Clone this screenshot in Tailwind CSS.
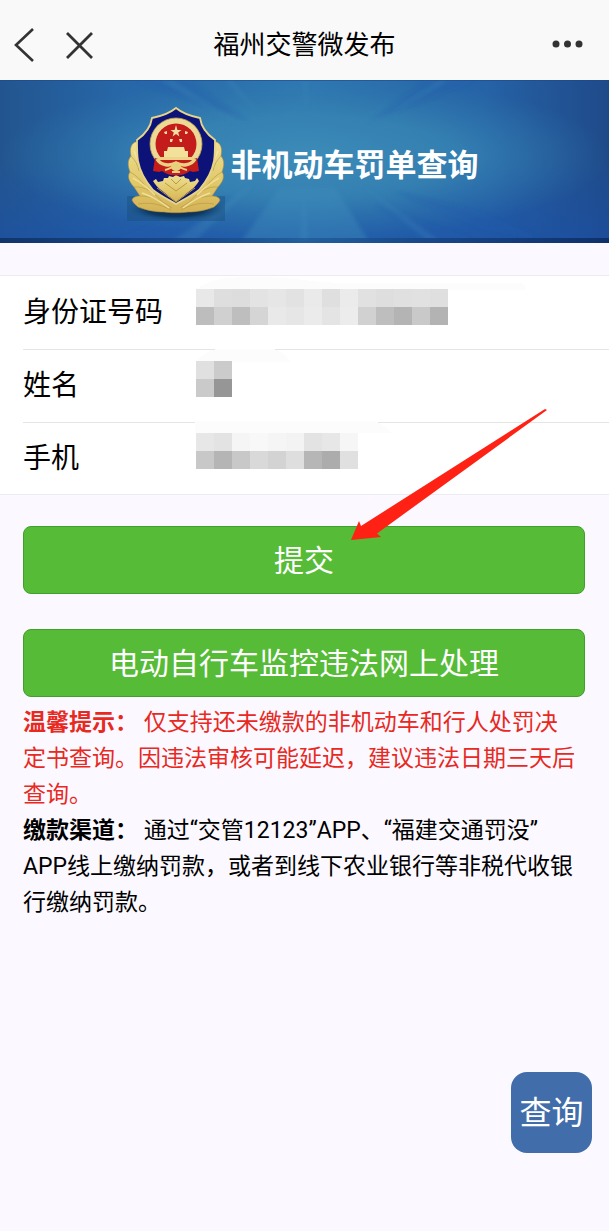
<!DOCTYPE html>
<html lang="zh-CN">
<head>
  <meta charset="UTF-8" />
  <meta name="viewport" content="width=device-width, initial-scale=1.0" />
  <title>福州交警微发布</title>
  <script src="https://cdn.jsdelivr.net/npm/@tailwindcss/browser@4"></script>
</head>
<body class="relative min-h-screen bg-[#fbf9ff] text-black font-[Roboto,'Noto_Sans_CJK_SC',sans-serif]">
  <header class="h-20 bg-[#f9f9f9] px-3 pt-2.5 grid grid-cols-[1fr_auto_1fr] items-center">
    <div class="flex items-center gap-6">
      <button type="button" aria-label="返回">
        <svg class="w-6 h-9" viewBox="0 0 24 36" fill="none" stroke="#333" stroke-width="2.6"><path d="M21 2 4 18 21 34" /></svg>
      </button>
      <button type="button" aria-label="关闭" class="ml-1">
        <svg class="w-8 h-9" viewBox="0 0 32 36" fill="none" stroke="#333" stroke-width="2.8"><path d="M3 6 28 31M28 6 3 31" /></svg>
      </button>
    </div>
    <h1 class="text-[26px] leading-9">福州交警微发布</h1>
    <button type="button" aria-label="更多" class="justify-self-end mr-3.5">
      <svg class="w-8 h-8" viewBox="0 0 32 32" fill="#333"><circle cx="5" cy="15" r="3.5" /><circle cx="16.500" cy="15" r="3.500" /><circle cx="28" cy="15" r="3.500" /></svg>
    </button>
  </header>

  <section class="relative h-[163px] overflow-hidden bg-[#2563a6]">
    <!-- Strahlen im Hintergrund -->
    <svg class="absolute inset-0 w-full h-full" viewBox="0 0 609 163" preserveAspectRatio="none">
      <defs>
        <linearGradient id="base" x1="0" y1="0" x2="1" y2="0">
          <stop offset="0" stop-color="#22558f" />
          <stop offset=".2" stop-color="#2767a8" />
          <stop offset=".5" stop-color="#2e78b2" />
          <stop offset=".8" stop-color="#2562a6" />
          <stop offset="1" stop-color="#1f4a89" />
        </linearGradient>
        <radialGradient id="glow" cx=".5" cy=".47" r=".5">
          <stop offset="0" stop-color="#3c8bb8" />
          <stop offset=".5" stop-color="#3785b3" stop-opacity=".8" />
          <stop offset="1" stop-color="#2f75aa" stop-opacity="0" />
        </radialGradient>
        <linearGradient id="foot" x1="0" y1="0" x2="0" y2="1">
          <stop offset="0" stop-color="#1d50a6" stop-opacity="0" />
          <stop offset="1" stop-color="#1b4fa6" stop-opacity=".6" />
        </linearGradient>
        <linearGradient id="edge" x1="0" y1="0" x2="1" y2="0">
          <stop offset="0" stop-color="#0f2f63" />
          <stop offset=".3" stop-color="#164484" />
          <stop offset=".5" stop-color="#1f5c9a" />
          <stop offset=".7" stop-color="#164484" />
          <stop offset="1" stop-color="#0d2a62" />
        </linearGradient>
        <filter id="soft"><feGaussianBlur stdDeviation="2" /></filter>
      </defs>
      <path fill="url(#base)" d="M0 0h609v163H0z" />
      <path fill="url(#foot)" d="M0 80h609v83H0z" />
      <path fill="url(#glow)" d="M0 0h609v163H0z" />
      <g filter="url(#soft)">
        <path fill="#3d8dbb" opacity=".4" d="M280 108h55l35 55H240z" />
        <path fill="#1f58ac" opacity=".28" d="M130 0h60l60 42zM480 0h-55l-55 42zM105 163l130-48-52 48zM375 125l60 38h50zM390 110l95 40 60 10-70-30z" />
        <path fill="#4c9bc4" opacity=".2" d="M160 0h12l70 46zM225 0h6l30 36zM440 0h9l-80 46zM170 163l85-60-62 60zM430 163l-68-58 80 58zM304 0h3v40zM300 163l4-50 4 50z" />
      </g>
      <path fill="#1b478f" opacity=".55" d="M0 0h609v1H0z" />
      <path fill="url(#edge)" opacity=".85" d="M0 158h609v5H0z" />
    </svg>

    <div class="relative h-full flex items-center justify-center gap-1.5 pr-1">
      <svg class="w-[98px] h-[116px] mt-1" viewBox="0 0 98 116" role="img" aria-label="警徽">
        <defs>
          <linearGradient id="gold" x1="0" y1="0" x2="0" y2="1">
            <stop offset="0" stop-color="#efdf94" />
            <stop offset=".6" stop-color="#e0c768" />
            <stop offset="1" stop-color="#d4b355" />
          </linearGradient>
          <radialGradient id="shade">
            <stop offset="0" stop-color="#061d38" />
            <stop offset=".6" stop-color="#0c3459" stop-opacity=".85" />
            <stop offset="1" stop-color="#205a8b" stop-opacity="0" />
          </radialGradient>
        </defs>
        <path fill="#164a78" opacity=".4" d="M0 90h98v25H0z" />
        <ellipse cx="49" cy="103" rx="50" ry="13" fill="url(#shade)" />
        <!-- Ährenkranz -->
        <path fill="url(#gold)" stroke="#b08f3d" stroke-width=".6" d="M8 36c-5 3-5 8-4 14-4 5-3 10-1 16-3 4-1 10 4 15l6 9c-4 0-7 1-8 4 1 3 4 5 6 7 7 3 17 5 26 5 5 1 19 1 24 0 9 0 19-2 26-5 2-2 5-4 6-7-1-3-4-4-8-4l6-9c5-5 7-11 4-15 2-6 3-11-1-16 1-6 1-11-4-14z" />
        <g fill="none" stroke="#b49545" stroke-width="1" opacity=".6">
          <path d="M4 50c4 4 7 9 8 15M3 66c6 3 11 8 15 14M7 81c10-1 21 5 30 17M13 90c10 0 21 4 32 12M11 98c12-2 22 0 33 6" />
          <path d="M94 50c-4 4-7 9-8 15M95 66c-6 3-11 8-15 14M91 81c-10-1-21 5-30 17M85 90c-10 0-21 4-32 12M87 98c-12-2-22 0-33 6" />
        </g>
        <g fill="none" stroke="#f6e9a9" stroke-width="1.400" opacity=".8">
          <path d="M7 45c4 9 7 20 13 30M6 72c7 4 15 10 22 17M15 87c9 3 18 8 27 15" />
          <path d="M91 45c-4 9-7 20-13 30M92 72c-7 4-15 10-22 17M83 87c-9 3-18 8-27 15" />
        </g>
        <!-- Schild -->
        <path fill="#0c1277" stroke="#e6d48a" stroke-width="1.800" d="M49 2c-6 5-14 8-24 10-1 7-5 15-15 22 0 8 0 15 1 21 2 11 8 21 15 29 6 5 14 9 23 14 9-5 17-9 23-14 7-8 13-18 15-29 1-6 1-13 1-21-10-7-14-15-15-22-10-2-18-5-24-10z" />
        <path fill="url(#gold)" d="m26 75 3-2 2 3 5-1 1-3h4l1-2 4 1 3-2 4 2 4-1 1 2 4 1 1 3 5-1 2-3 2 3c-2 3-5 7-8 9-5 4-9 7-15 12-6-5-10-8-15-12-3-2-6-6-8-9z" />
        <path fill="none" stroke="#b99a45" stroke-width="1" d="m30 82 19 14 19-14M38 77l11 8 11-8M44 73l5 5 5-5" />
        <!-- Staatswappen -->
        <circle cx="49" cy="38" r="26" fill="#ecd995" stroke="#c4a24a" stroke-width=".8" />
        <circle cx="49" cy="38" r="20.500" fill="#c41b1b" />
        <path fill="#c41b1b" d="M28 52c7 3 35 3 42 0l2 13-6 1-3-1c-8 6-20 6-28 0l-3 1-6-1z" />
        <path fill="#f1df9e" d="m49 19 1.400 5h4.100l-3.300 2.500 1.200 4-3.400-2.400-3.400 2.400 1.200-4-3.300-2.500h4.100zM37 26l3-1v3h-2zM58 25l3 1-1 2h-2zM43 33h3l-1 3h-2zM52 33h3v3h-2z" />
        <path fill="#f3e09b" d="M41 41h16l1 4h3v6H37v-6h3z" />
        <path fill="#ecd48a" d="M30 51h38l-2 3H32z" />
        <path fill="none" stroke="#ead180" stroke-width="3.500" d="M30 53c4 7 13 7 19 4 6 3 15 3 19-4" />
        <path fill="none" stroke="#ead180" stroke-width="2" d="M38 64c5-1 8-4 11-4s6 3 11 4M45 66h8" />
        <ellipse cx="49" cy="61" rx="5" ry="4" fill="#e9cf7b" />
      </svg>
      <h2 class="mt-2 text-[31px] leading-10 font-bold text-white">非机动车罚单查询</h2>
    </div>
  </section>

  <main class="relative pt-8">
    <form>
      <div class="bg-white border-y border-[#ececf0] pl-[23px]">
        <div class="flex items-center h-[73px]">
          <label for="idno" class="w-[172px] text-[28px]">身份证号码</label>
          <div class="relative flex-1 h-full">
            <input id="idno" type="text" class="w-full h-full outline-none" />
            <svg class="absolute left-0 top-px w-[352px] h-[54px] pointer-events-none" viewBox="0 0 352 54" shape-rendering="crispEdges" data-rows="e8e8e8 dedede dddddd e3e3e3 e6e6e6 e2e2e2 eaeaea dfdfdf ebebeb e1e1e1 dedede e0e0e0 e1e1e1 dfdfdf|bdbdbd d0d0d0 bebebe d5d5d5 e9e9e9 e6e6e6 ebebeb e4e4e4 ececec d1d1d1 bebebe b4b4b4 c9c9c9 b3b3b3"><path fill="#fcfcfc" d="M0 13C14 2 30 0 60 0c40 0 60 6 90 6h175q7 1 5 7z" /></svg>
          </div>
        </div>
        <div class="flex items-center h-[73px] border-t border-[#e5e5e5]">
          <label for="name" class="w-[172px] text-[28px]">姓名</label>
          <div class="relative flex-1 h-full">
            <input id="name" type="text" class="w-full h-full outline-none" />
            <svg class="absolute left-0 -top-px w-[352px] h-[54px] pointer-events-none" viewBox="0 0 352 54" shape-rendering="crispEdges" data-rows="e0e0e0 cbcbcb|cacaca 969696"><path fill="#fcfcfc" d="M0 13Q10 2 22 0h56q10 2 18 13z" /></svg>
          </div>
        </div>
        <div class="flex items-center h-[72px] border-t border-[#e5e5e5]">
          <label for="phone" class="w-[172px] text-[28px]">手机</label>
          <div class="relative flex-1 h-full">
            <input id="phone" type="tel" class="w-full h-full outline-none" />
            <svg class="absolute left-0 -top-0.5 w-[352px] h-[54px] pointer-events-none" viewBox="0 0 352 54" shape-rendering="crispEdges" data-rows="e7e7e7 e3e3e3 f5f5f5 f8f8f8 f5f5f5 f3f3f3 e3e3e3 e7e7e7 f6f6f6|c8c8c8 b5b5b5 c8c8c8 d9d9d9 d3d3d3 dedede b6b6b6 acacac e0e0e0"><path fill="#fcfcfc" d="M0 12V0h180q10 4 16 12z" /></svg>
          </div>
        </div>
      </div>

      <div class="flex flex-col gap-[35px] pt-[31px] pl-[23px] pr-6">
        <button type="submit" class="h-[68px] rounded-lg border border-[#419f2b] bg-[#56bb37] text-white text-[30px]">提交</button>
        <button type="button" class="h-[68px] rounded-lg border border-[#419f2b] bg-[#56bb37] text-white text-[30px]">电动自行车监控违法网上处理</button>
      </div>
    </form>

    <div class="pt-2 pl-[23px] pr-8 text-[23px] leading-9">
      <p class="text-[#e8291f]"><strong>温馨提示：</strong>&nbsp;仅支持还未缴款的非机动车和行人处罚决定书查询。因违法审核可能延迟，建议违法日期三天后查询。</p>
      <p><strong>缴款渠道：</strong>&nbsp;通过“交管12123”APP、“福建交通罚没”APP线上缴纳罚款，或者到线下农业银行等非税代收银行缴纳罚款。</p>
    </div>

    <!-- roter Pfeil auf den Absenden-Button -->
    <svg class="absolute right-[62px] top-[166px] w-[197px] h-[134px] pointer-events-none" viewBox="0 0 197 134" fill="#ff2113">
      <path d="M195 0 197 1 27 124.500 31 128 1 131 9 112 11 117z" />
    </svg>
  </main>

  <button type="button" class="fixed right-[17px] bottom-[78px] w-[81px] h-[81px] rounded-2xl bg-[#426dab] text-white text-[32px]">查询</button>

  <script>
    // Mosaik-Kacheln über den Eingabefeldern
    document.querySelectorAll('svg[data-rows]').forEach(svg => {
      svg.dataset.rows.split('|').forEach((row, y) => {
        row.split(' ').forEach((col, x) => {
          const r = document.createElementNS('http://www.w3.org/2000/svg', 'rect');
          r.setAttribute('x', 1 + x * 18);
          r.setAttribute('y', 12 + y * 18);
          r.setAttribute('width', 18);
          r.setAttribute('height', 18);
          r.setAttribute('fill', '#' + col);
          svg.appendChild(r);
        });
      });
    });
  </script>
</body>
</html>
